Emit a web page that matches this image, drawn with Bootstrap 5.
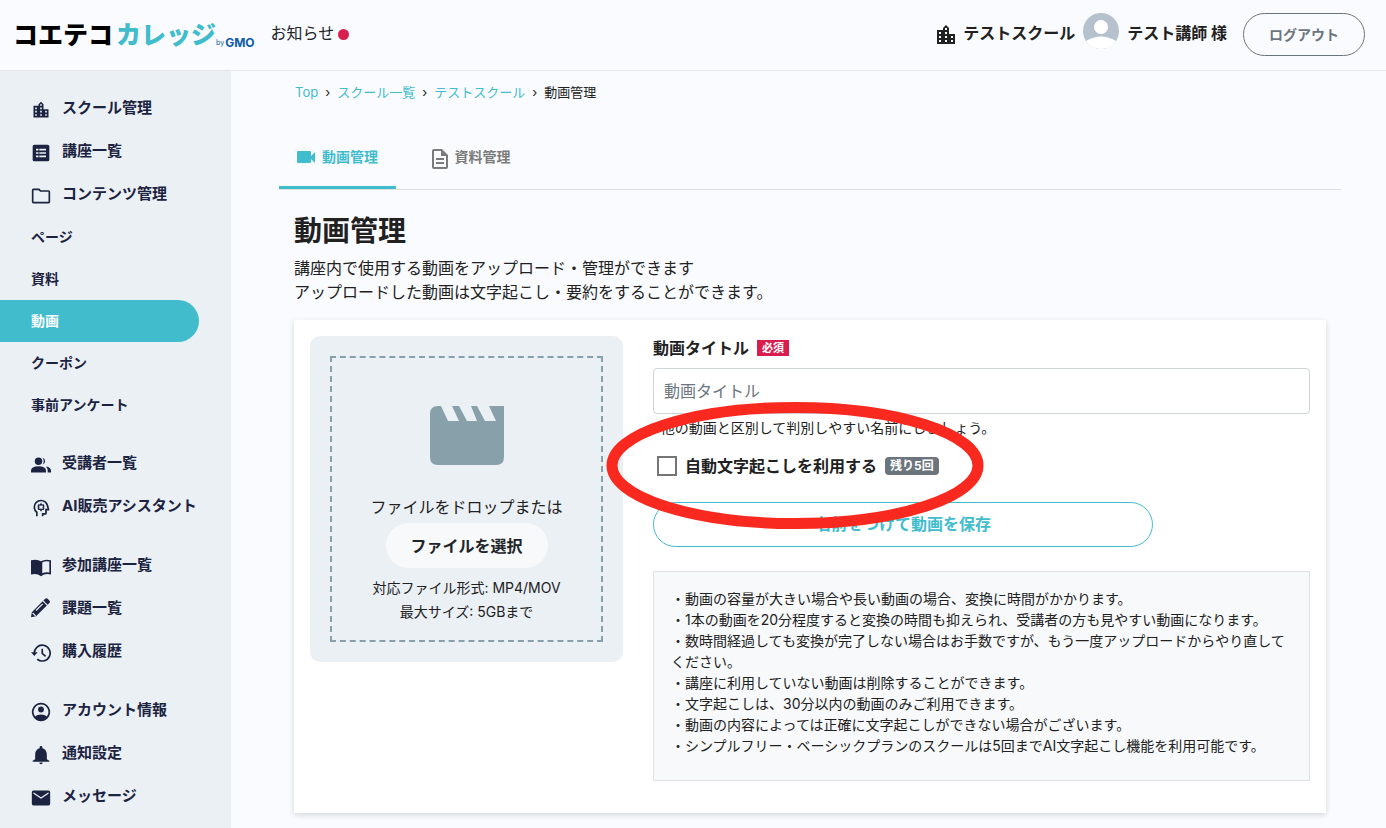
<!DOCTYPE html>
<html lang="ja">
<head>
<meta charset="utf-8">
<meta name="viewport" content="width=device-width, initial-scale=1">
<title>動画管理 | コエテコカレッジ</title>
<link href="https://cdn.jsdelivr.net/npm/bootstrap@5.3.0/dist/css/bootstrap.min.css" rel="stylesheet">
<style>
:root { --teal: #40bccd; --navy: #1b2340; --ink: #212529; --pale: #ebf0f5; --slate: #87a0aa; --crimson: #d81e4e; }
body { font-family: Inter, "Noto Sans CJK JP", sans-serif; color: #212121; background: #fafbfe; font-size: 16px; line-height: 24px; }
svg { display: block; flex: none; fill: currentColor; }
a { text-decoration: none; color: var(--teal); }
.topbar { height: 71px; border-bottom: 1px solid #e5e7ea; padding: 0 21px 1px 13px; }
.logo { color: #000; font-weight: 900; font-size: 25px; line-height: 32px; white-space: nowrap; }
.logo .maker { color: #0d5bab; line-height: 12px; margin-bottom: 2px; gap: 1px; }
.logo .by { font-size: 7px; font-weight: 400; }
.logo .gmo { font-size: 12px; font-weight: 700; }
.logo .teal { color: var(--teal); margin-left: 3px; }
.dot-new { width: 11px; height: 11px; border-radius: 50%; background: var(--crimson); }
.who { font-weight: 700; color: #212121; }
.btn-logout { border: 1px solid #6c757d; border-radius: 22px; color: #6c757d; font-weight: 700; font-size: 14px; height: 43px; width: 122px; }
.side { width: 231px; background: var(--pale); flex: none; padding-top: 16px; min-height: calc(100vh - 71px); }
.side a { color: var(--navy); font-weight: 700; }
.side .main-link { height: 43px; padding: 0 0 1px 31px; font-size: 15px; display: flex; align-items: center; gap: 11px; white-space: nowrap; }
.side .main-link svg { margin-top: 3px; }
.side .sub-link { height: 42px; padding-left: 31px; font-size: 14px; display: flex; align-items: center; width: 199px; }
.side .sub-link.active { background: var(--teal); color: #fff; border-radius: 0 21px 21px 0; }
.side .group { margin-bottom: 16px; }
.content { min-width: 0; padding: 11px 45px 14px 48px; }
.inset { padding: 0 15px; }
.crumbs { font-size: 13px; line-height: 20px; }
.crumbs .breadcrumb-item + .breadcrumb-item { padding-left: 7px; }
.crumbs .breadcrumb-item + .breadcrumb-item::before { content: "›"; color: #212121; padding-right: 7px; }
.crumbs .breadcrumb-item.active { color: #212121; }
.page-tabs { border-bottom: 1px solid #dcdfe2; font-size: 14px; margin-top: 25px; }
.page-tabs .nav-link { height: 62px; width: 117px; display: flex; align-items: center; justify-content: center; gap: 6px; font-weight: 700; color: #7b7b7b; padding: 0; border-bottom: 3px solid transparent; white-space: nowrap; }
.page-tabs .nav-link.active { color: var(--teal); border-bottom-color: var(--teal); }
.page-title { font-size: 28px; line-height: 36px; font-weight: 700; margin: 23px 0 7px; }
.panel { background: #fff; box-shadow: 0 2px 6px rgba(0,0,0,.15); padding: 16px 16px 32px; gap: 30px; }
.drop { background: var(--pale); border-radius: 10px; padding: 20px; width: 313px; flex: none; }
.drop-in { border: 2px dashed var(--slate); height: 286px; color: #212121; }
.clapper { fill: var(--slate); margin-bottom: 30px; }
.btn-pick { background: #f8f9fb; border: 0; border-radius: 23px; font-weight: 700; width: 162px; height: 45px; color: var(--ink); }
.t14 { font-size: 14px; }
.hint { font-size: 14px; line-height: 19px; }
.hint span { font-size: 12px; }
.need { background: var(--crimson); color: #fff; font-size: 11px; line-height: 16px; font-weight: 700; padding: 0 5px; }
.title-box { height: 46px; border: 1px solid #ced4da; border-radius: 4px; padding: 0 10px; }
.title-box::placeholder { color: #6c757d; }
.box-tick { appearance: none; width: 20px; height: 20px; border: 2px solid #757575; background: #fff; margin: 0; flex: none; }
.box-tick:checked { background: var(--teal); }
.left-tag { background: #6c757d; color: #fff; font-size: 12px; line-height: 18px; font-weight: 700; border-radius: 4px; padding: 0 5px; }
.btn-save { border: 1px solid var(--teal); border-radius: 23px; color: var(--teal); font-weight: 700; height: 45px; width: 500px; max-width: 100%; padding: 0 0 2px; }
.notes { background: #f8f9fb; border: 1px solid #dee2e6; font-size: 14px; line-height: 21px; padding: 16px 17px 24px; }
.marker { position: absolute; left: -47px; top: 66px; width: 378px; height: 127px; pointer-events: none; }
</style>
</head>
<body>
<header class="topbar d-flex align-items-center">
  <a href="#" class="logo d-flex align-items-end"><span>コエテコ</span><span class="teal">カレッジ</span><span class="maker d-flex align-items-end"><span class="by">by</span><span class="gmo">GMO</span></span></a>
  <a href="#" class="d-flex align-items-center gap-1 text-body ms-3"><span class="pb-1">お知らせ</span><span class="dot-new"></span></a>
  <div class="who ms-auto d-flex align-items-center gap-2">
    <svg width="18" height="19" viewBox="0 0 18 19"><path fill-rule="evenodd" d="M0 5h6V3l3-3 3 3v6h6v10H0zM2 7v2h2V7zm0 4v2h2v-2zm0 4v2h2v-2zM8 3v2h2V3zm0 4v2h2V7zm0 4v2h2v-2zm0 4v2h2v-2zm6-4v2h2v-2zm0 4v2h2v-2z"/></svg>
    <span class="pb-1">テストスクール</span>
    <svg class="mb-2" width="36" height="36" viewBox="0 0 36 36"><circle cx="18" cy="18" r="18" fill="#b5c1cc"/><circle cx="18" cy="14" r="7" fill="#fff"/><path d="M3 28q15-9 30 0Q28 36 18 36T3 28" fill="#fff"/></svg>
    <span class="pb-1">テスト講師 様</span>
    <button type="button" class="btn btn-logout ms-2 p-0">ログアウト</button>
  </div>
</header>
<div class="d-flex">
  <nav class="side" aria-label="メニュー">
    <div class="group">
      <a href="#" class="main-link"><svg width="20" height="20" viewBox="0 0 24 24"><path d="M15 11V5l-3-3-3 3v2H3v14h18V11h-6zm-8 8H5v-2h2v2zm0-4H5v-2h2v2zm0-4H5V9h2v2zm6 8h-2v-2h2v2zm0-4h-2v-2h2v2zm0-4h-2V9h2v2zm0-4h-2V5h2v2zm6 12h-2v-2h2v2zm0-4h-2v-2h2v2z"/></svg>スクール管理</a>
      <a href="#" class="main-link"><svg width="20" height="20" viewBox="0 0 24 24"><path fill-rule="evenodd" d="M4 2h16q2 0 2 2v16q0 2-2 2H4q-2 0-2-2V4q0-2 2-2zM6 7v2h3V7zm4 0v2h8V7zm-4 4v2h3v-2zm4 0v2h8v-2zm-4 4v2h3v-2zm4 0v2h8v-2z"/></svg>講座一覧</a>
      <a href="#" class="main-link"><svg width="20" height="20" viewBox="0 0 24 24"><path fill-rule="evenodd" d="M3 3h7l2 2h9q2 0 2 2v12q0 2-2 2H3q-2 0-2-2V5q0-2 2-2zm0 2v14h18V7h-10L9 5z"/></svg>コンテンツ管理</a>
      <a href="#" class="sub-link">ページ</a>
      <a href="#" class="sub-link">資料</a>
      <a href="#" class="sub-link active" aria-current="page">動画</a>
      <a href="#" class="sub-link">クーポン</a>
      <a href="#" class="sub-link">事前アンケート</a>
    </div>
    <div class="group">
      <a href="#" class="main-link"><svg width="20" height="20" viewBox="0 0 24 24"><circle cx="9" cy="7.500" r="4.500"/><path d="M0 21v-2q0-5.500 9-5.500t9 5.500v2zM14 3.300a4.500 4.500 0 0 1 0 8.400q2.500-4.200 0-8.400M18 13.700q6 1 6 5.300v2h-4v-2q0-3-2-5.300"/></svg>受講者一覧</a>
      <a href="#" class="main-link"><svg width="20" height="20" viewBox="0 0 24 24"><path fill-rule="evenodd" d="M6 22v-4.300Q3 15 3 11q0-3.700 2.600-6.400T12 2q3.200 0 5.600 1.900t3.100 4.800L22 13.800q.2.500-.1.800t-.8.400h-2v3q0 .8-.6 1.400T17 20h-2v2h-2v-4h4v-5h2.700l-1-3.800Q18.100 7 16.300 5.500T12 4Q9.100 4 7 6t-2 5q0 3.500 3 5.800V22z"/><path d="M12 7l1 1.500 1.800-.1.600 1.400L14.500 11l.9 1.200-.6 1.400-1.800-.1L12 15l-1-1.500-1.800.1-.6-1.400.9-1.200-.9-1.200.6-1.400 1.800.1z" fill="none" stroke="currentColor" stroke-width="1.500"/></svg>AI販売アシスタント</a>
    </div>
    <div class="group">
      <a href="#" class="main-link"><svg width="20" height="20" viewBox="0 0 24 24"><path fill-rule="evenodd" d="M12 5q5-3 12-1v17q-7-2-12 2Q7 19 0 21V4q7-2 12 1zm1.500 1.500v13q4-2 8.500-1V5.500q-5-1-8.500 1z"/></svg>参加講座一覧</a>
      <a href="#" class="main-link"><svg class="mb-1" width="20" height="20" viewBox="0 0 24 24"><path d="M17 1q1.500-1.500 3 0l2 2q1.500 1.500 0 3l-2 2-5-5zM14 4l5 5L6 22l-6 1 1-6z"/><path d="M6 15l8-8M2 18l3.500 3.500" stroke="#ebf0f5" stroke-width="1.500"/></svg>課題一覧</a>
      <a href="#" class="main-link"><svg width="20" height="20" viewBox="0 0 24 24"><path fill="none" stroke="currentColor" stroke-width="2" d="M4 13a9.500 9.500 0 1 1 3.500 6.500M13.500 7v5.500l4 3.500"/><path d="M0 11h8l-4 4.500z"/></svg>購入履歴</a>
    </div>
    <div class="group">
      <a href="#" class="main-link"><svg width="20" height="20" viewBox="0 0 24 24"><path fill-rule="evenodd" d="M12 1a11 11 0 1 0 .01 0M12 3a9 9 0 0 1 7 14.500Q17 15 12 15t-7 2.500A9 9 0 0 1 12 3"/><circle cx="12" cy="9" r="3.500"/></svg>アカウント情報</a>
      <a href="#" class="main-link"><svg width="20" height="20" viewBox="0 0 24 24"><path d="M12 23c1.100 0 2-.9 2-2h-4c0 1.100.9 2 2 2zm7-6v-6c0-3.500-2-6.400-5.300-7.200V3a1.700 1.700 0 0 0-3.400 0v.8C7 4.600 5 7.500 5 11v6l-3 2v1h20v-1z"/></svg>通知設定</a>
      <a href="#" class="main-link"><svg width="20" height="20" viewBox="0 0 24 24"><path fill-rule="evenodd" d="M3 3h18q2 0 2 2v14q0 2-2 2H3q-2 0-2-2V5q0-2 2-2zm0 2v2l9 6 9-6V5l-9 6z"/></svg>メッセージ</a>
    </div>
  </nav>
  <main class="content flex-grow-1">
    <nav aria-label="パンくず" class="px-3"><ol class="breadcrumb crumbs mb-0">
      <li class="breadcrumb-item"><a href="#">Top</a></li>
      <li class="breadcrumb-item"><a href="#">スクール一覧</a></li>
      <li class="breadcrumb-item"><a href="#">テストスクール</a></li>
      <li class="breadcrumb-item active" aria-current="page">動画管理</li>
    </ol></nav>
    <ul class="nav page-tabs">
      <li><a class="nav-link active" href="#"><svg width="19" height="14" viewBox="0 0 19 14"><path d="M0 2q0-1 1-1h12q1 0 1 1v4l4-4v11l-4-4v3q0 1-1 1H1q-1 0-1-1z"/></svg>動画管理</a></li>
      <li class="ms-3"><a class="nav-link" href="#"><svg class="mt-1" width="18" height="20" viewBox="0 0 18 20"><path fill-rule="evenodd" d="M3 0h8l6 6v12q0 2-2 2H3q-2 0-2-2V2q0-2 2-2zm0 2v16h12V7h-5V2zm2 7h8v2H5zm0 4h8v2H5z"/></svg>資料管理</a></li>
    </ul>
    <div class="inset">
      <h1 class="page-title">動画管理</h1>
      <p class="mb-3">講座内で使用する動画をアップロード・管理ができます<br>アップロードした動画は文字起こし・要約をすることができます。</p>
      <section class="panel d-flex align-items-start">
        <div class="drop">
          <div class="drop-in d-flex flex-column align-items-center">
            <svg class="clapper mt-5" width="74" height="59" viewBox="0 0 74 59"><path d="M8 0h3l7 15h11L22 0h7l8 15h10L41 0h6l8 15h11L59 0h15v51q0 8-8 8H8q-8 0-8-8V8q0-8 8-8z"/></svg>
            <div>ファイルをドロップまたは</div>
            <button type="button" class="btn btn-pick p-0 mt-1 mb-2">ファイルを選択</button>
            <div class="t14 text-center">対応ファイル形式: MP4/MOV<br>最大サイズ: 5GBまで</div>
          </div>
        </div>
        <form class="flex-grow-1 position-relative">
          <div class="d-flex align-items-center gap-2 mb-2"><label for="title" class="fw-bold">動画タイトル</label><span class="need">必須</span></div>
          <input id="title" type="text" class="form-control title-box" placeholder="動画タイトル">
          <div class="hint mt-1"><span>※</span>他の動画と区別して判別しやすい名前にしましょう。</div>
          <div class="d-flex align-items-center gap-2 ms-1 mt-3"><input type="checkbox" id="auto" class="box-tick"><label for="auto" class="fw-bold">自動文字起こしを利用する</label><span class="left-tag">残り5回</span></div>
          <button type="button" class="btn btn-save mt-4">名前をつけて動画を保存</button>
          <div class="notes mt-4">・動画の容量が大きい場合や長い動画の場合、変換に時間がかかります。<br>・1本の動画を20分程度すると変換の時間も抑えられ、受講者の方も見やすい動画になります。<br>・数時間経過しても変換が完了しない場合はお手数ですが、もう一度アップロードからやり直してください。<br>・講座に利用していない動画は削除することができます。<br>・文字起こしは、30分以内の動画のみご利用できます。<br>・動画の内容によっては正確に文字起こしができない場合がございます。<br>・シンプルフリー・ベーシックプランのスクールは5回までAI文字起こし機能を利用可能です。</div>
          <svg class="marker" viewBox="0 0 378 127" aria-hidden="true"><ellipse cx="189" cy="63.500" rx="183" ry="58" fill="none" stroke="#f9291f" stroke-width="11"/></svg>
        </form>
      </section>
    </div>
  </main>
</div>
<script src="https://cdn.jsdelivr.net/npm/bootstrap@5.3.0/dist/js/bootstrap.bundle.min.js"></script>
</body>
</html>
